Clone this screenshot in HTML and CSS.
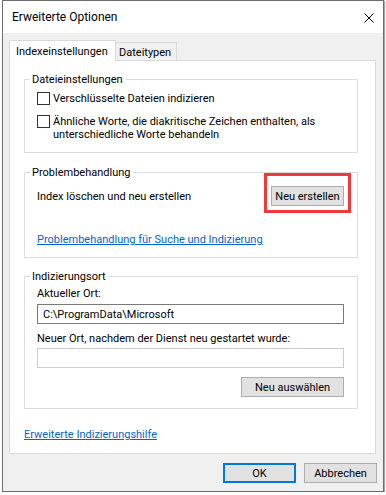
FILE: index.html
```html
<!DOCTYPE html>
<html lang="de">
<head>
<meta charset="utf-8">
<title>Erweiterte Optionen</title>
<link rel="stylesheet" href="styles.css">
</head>
<body>
<div class="window">
  <div class="titlebar">
    <span class="title">Erweiterte Optionen</span>
    <svg class="close" viewBox="0 0 10 10" width="10" height="10" aria-label="Schließen"><path d="M0.5 0.5L9.5 9.5M9.5 0.5L0.5 9.5" stroke="#000" stroke-width="1" fill="none"/></svg>
  </div>
  <div class="content">
    <div class="tabs">
      <div class="tab tab-active">Indexeinstellungen</div>
      <div class="tab">Dateitypen</div>
    </div>
    <div class="panel">
      <fieldset class="group g1">
        <legend>Dateieinstellungen</legend>
        <div class="group-body">
          <label class="check check-1"><span class="box"></span><span>Verschlüsselte Dateien indizieren</span></label>
          <label class="check check-2"><span class="box"></span><span>Ähnliche Worte, die diakritische Zeichen enthalten, als<br>unterschiedliche Worte behandeln</span></label>
        </div>
      </fieldset>
      <fieldset class="group g2">
        <legend>Problembehandlung</legend>
        <div class="group-body">
          <div class="row">
            <span>Index löschen und neu erstellen</span>
            <span class="hl"><button class="btn btn-rebuild">Neu erstellen</button><span class="mark"></span></span>
          </div>
          <a class="link trouble-link" href="#">Problembehandlung für Suche und Indizierung</a>
        </div>
      </fieldset>
      <fieldset class="group g3">
        <legend>Indizierungsort</legend>
        <div class="group-body stack">
          <div class="field-label label-1">Aktueller Ort:</div>
          <div class="input">C:\ProgramData\Microsoft</div>
          <div class="field-label label-2">Neuer Ort, nachdem der Dienst neu gestartet wurde:</div>
          <div class="input input-disabled"></div>
          <button class="btn btn-select">Neu auswählen</button>
        </div>
      </fieldset>
      <a class="link help-link" href="#">Erweiterte Indizierungshilfe</a>
    </div>
    <div class="footer">
      <button class="btn btn-footer btn-ok">OK</button>
      <button class="btn btn-footer">Abbrechen</button>
    </div>
  </div>
</div>
</body>
</html>
```
FILE: styles.css
```css
* { box-sizing: border-box; }
html, body { margin: 0; padding: 0; background: #ffffff; }
body {
  font-family: Roboto, "Liberation Sans", sans-serif;
  font-size: 11px;
  color: #000;
}
.window {
  margin-left: 2px;
  width: 382px;
  height: 492px;
  border: 1px solid #6d6d6d;
  box-shadow: 1px 1px 1px rgba(0,0,0,0.35);
  background: #f0f0f0;
  display: flex;
  flex-direction: column;
}
.titlebar {
  flex: none;
  height: 32px;
  background: #fff;
  display: flex;
  align-items: center;
  justify-content: space-between;
  padding: 0 9px;
}
.title { font-size: 12px; }
.close { margin-top: 2px; display: block; }
.content {
  flex: 1;
  display: flex;
  flex-direction: column;
  padding: 7px 7px 8px 6px;
}
.tabs {
  display: flex;
  align-items: flex-end;
  height: 21px;
  margin-bottom: -1px;
}
.tab {
  height: 19px;
  width: 61px;
  display: flex;
  align-items: center;
  padding-left: 3px;
  background: #f0f0f0;
  border: 1px solid #d9d9d9;
  border-left: 0;
  border-bottom: 0;
  white-space: nowrap;
}
.tab-active {
  position: relative;
  z-index: 1;
  height: 21px;
  width: 107px;
  padding-left: 6px;
  background: #fff;
  border-left: 1px solid #d9d9d9;
}
.panel {
  height: 394px;
  background: #fff;
  border: 1px solid #d9d9d9;
  padding: 11px 17px 0 14px;
}
.group {
  margin: 0;
  padding: 0;
  min-width: 0;
  border: 1px solid #dcdcdc;
}
.group legend {
  margin-left: 5px;
  padding: 0 3px 0 2px;
  line-height: 15px;
}
.g2 { margin-top: 12px; }
.g3 { margin-top: 11px; }
.group-body { padding: 0 13px 11px 12px; }
.check {
  display: flex;
  align-items: flex-start;
  gap: 3px;
  line-height: 13px;
}
.check-1 { margin-top: 5px; }
.check-2 { margin-top: 10px; }
.box {
  flex: none;
  width: 13px;
  height: 13px;
  border: 1px solid #333;
  background: #fff;
}
.row {
  display: flex;
  align-items: center;
  justify-content: space-between;
  height: 20px;
  margin-top: 6px;
}
.hl { position: relative; display: block; height: 20px; }
.mark {
  position: absolute;
  left: -7px;
  top: -13px;
  right: -7px;
  bottom: -7px;
  border: 3px solid #f03a3a;
}
.btn {
  display: block;
  height: 20px;
  padding: 0;
  font: inherit;
  color: #000;
  background: #e1e1e1;
  border: 1px solid #adadad;
}
.btn-rebuild { width: 73px; }
.link {
  display: block;
  line-height: 13px;
  color: #0066cc;
  text-decoration: underline;
}
.trouble-link { margin-top: 27px; }
.stack { display: flex; flex-direction: column; }
.field-label { line-height: 13px; }
.label-1 { margin-top: 3px; }
.label-2 { margin-top: 8px; }
.input {
  height: 20px;
  margin-top: 4px;
  padding-left: 5px;
  display: flex;
  align-items: center;
  background: #fff;
  border: 1px solid #7a7a7a;
}
.input-disabled { margin-top: 3px; border-color: #cccccc; }
.btn-select { width: 103px; margin-top: 9px; align-self: flex-end; }
.help-link { margin-top: 19px; align-self: flex-start; }
.footer {
  display: flex;
  justify-content: flex-end;
  gap: 8px;
  margin-top: 9px;
  margin-right: -1px;
}
.btn-footer { width: 73px; }
.btn-ok { border: 2px solid #0078d7; }
```
